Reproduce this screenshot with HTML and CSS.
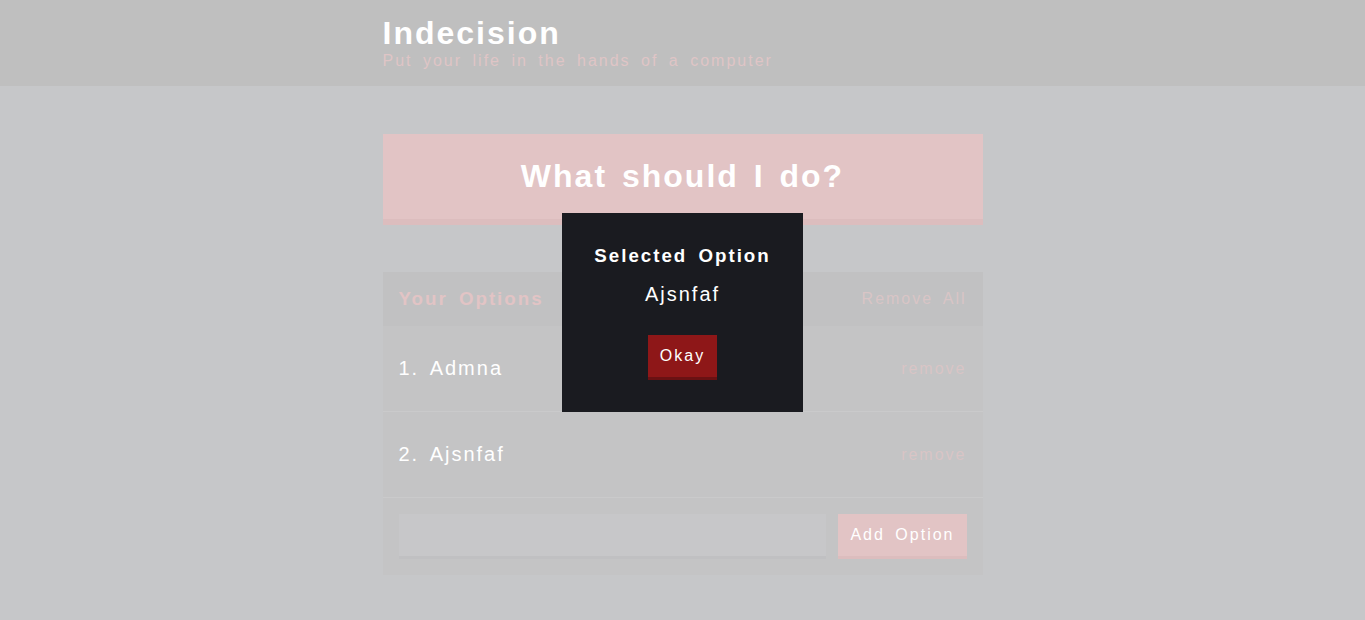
FILE: index.html
```html
<!DOCTYPE html>
<html lang="en">
<head>
<meta charset="utf-8">
<title>Indecision</title>
<link rel="stylesheet" href="styles.css">
</head>
<body>
<header class="header">
  <div class="container">
    <h1 class="header__title">Indecision</h1>
    <h2 class="header__subtitle">Put your life in the hands of a computer</h2>
  </div>
</header>
<main class="container">
  <button class="big-button">What should I do?</button>
  <div class="widget">
    <div class="widget-header">
      <h3 class="widget-header__title">Your Options</h3>
      <button class="button button--link">Remove All</button>
    </div>
    <div class="option">
      <p class="option__text">1. Admna</p>
      <button class="button button--link">remove</button>
    </div>
    <div class="option">
      <p class="option__text">2. Ajsnfaf</p>
      <button class="button button--link">remove</button>
    </div>
    <form class="add-option">
      <input class="add-option__input" type="text" name="option">
      <button class="button button--add" type="button">Add Option</button>
    </form>
  </div>
</main>
<div class="overlay">
  <div class="modal">
    <h3 class="modal__title">Selected Option</h3>
    <p class="modal__body">Ajsnfaf</p>
    <button class="button button--okay">Okay</button>
  </div>
</div>
</body>
</html>
```

FILE: styles.css
```css
* {
  box-sizing: border-box;
}

html, body {
  margin: 0;
  padding: 0;
}

body {
  background: #c6c7c9;
  color: #ffffff;
  font-family: "Liberation Sans", Arial, sans-serif;
  font-size: 16px;
  letter-spacing: 2px;
  word-spacing: 4px;
  min-height: 620px;
}

button, input {
  font-family: inherit;
  font-size: 16px;
  letter-spacing: inherit;
  word-spacing: inherit;
}

.container {
  width: 600px;
  margin: 0 auto;
}

.header {
  background: #bfbfbf;
  padding: 15px 0 16px;
  margin-bottom: 48px;
}

.header__title {
  font-size: 32px;
  font-weight: bold;
  margin: 0;
}

.header__subtitle {
  color: #dfc5c6;
  font-size: 16px;
  font-weight: 500;
  margin: 0;
}

.big-button {
  display: block;
  width: 100%;
  background: #e2c4c5;
  border: none;
  border-bottom: 6px solid #dcbdbe;
  color: #ffffff;
  font-size: 32px;
  font-weight: bold;
  padding: 24px;
  margin: 0 0 47px;
}

.widget {
  background: #c4c4c5;
}

.widget-header {
  display: flex;
  justify-content: space-between;
  align-items: center;
  background: #c1c1c2;
  padding: 16px;
}

.widget-header__title {
  color: #e2c4c5;
  font-size: 18.72px;
  font-weight: bold;
  margin: 0;
}

.button {
  border: none;
  color: #ffffff;
  padding: 12px;
}

.button--link {
  background: none;
  color: #d9c5c6;
  padding: 0;
}

.option {
  display: flex;
  justify-content: space-between;
  align-items: center;
  padding: 31px 16px;
  border-bottom: 1px solid #cacacb;
}

.option__text {
  font-size: 20px;
  margin: 0;
}

.add-option {
  display: flex;
  padding: 16px;
  margin: 0;
}

.add-option__input {
  flex-grow: 1;
  background: #c7c7c9;
  border: none;
  border-bottom: 3px solid #c0c0c2;
  color: #ffffff;
  margin-right: 12px;
  padding: 12px;
}

.button--add {
  background: #e2c4c5;
  border-bottom: 3px solid #dcbdbe;
}

.overlay {
  position: fixed;
  top: 0;
  right: 0;
  bottom: 0;
  left: 0;
  display: flex;
  align-items: center;
  justify-content: center;
  padding-top: 5px;
}

.modal {
  background: #1a1b20;
  color: #ffffff;
  padding: 32px;
  text-align: center;
}

.modal__title {
  font-size: 18.72px;
  font-weight: bold;
  margin: 0 0 16px;
}

.modal__body {
  font-size: 20px;
  margin: 0 0 29px;
}

.button--okay {
  background: #8e1718;
  border-bottom: 3px solid #6a1113;
}
```
